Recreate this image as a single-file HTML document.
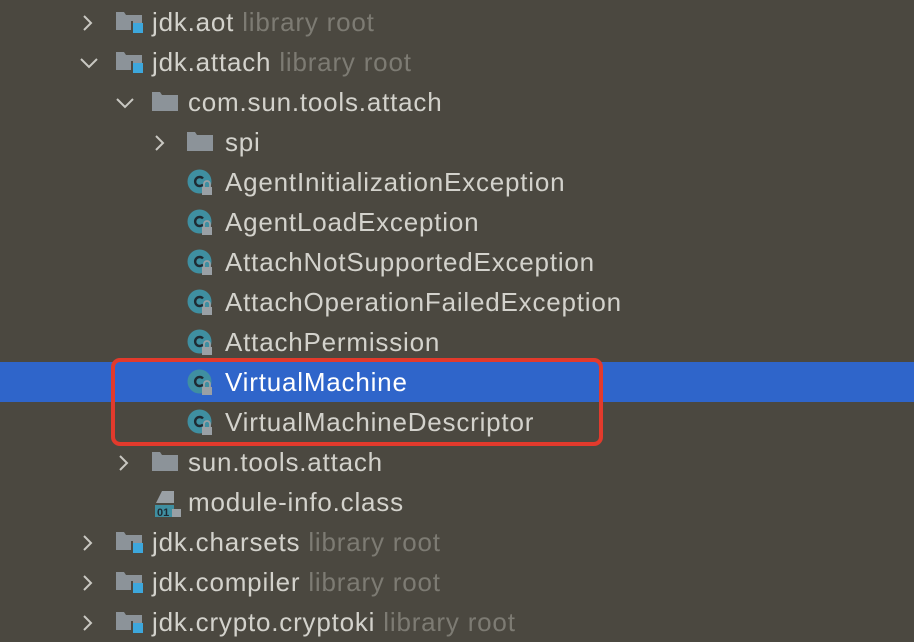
<!DOCTYPE html>
<html><head><meta charset="utf-8"><style>
body{margin:0;width:914px;height:620px;overflow:hidden;background:#4b4840;font-family:"Liberation Sans",sans-serif;position:relative}
.row{position:absolute;left:0;width:914px;height:40px}
.sel{background:#2f65ca}
.t{position:absolute;top:6px;font-size:26px;letter-spacing:0.8px;color:#d3d2cc;white-space:nowrap;line-height:28px}
.g{color:#7d7b73}
.sel .t{color:#fff}
.arr{position:absolute;top:12px}
.ic{position:absolute;top:8px}
.box{position:absolute;left:111px;top:358px;width:484px;height:80px;border:4px solid #e23a2c;border-radius:9px}
</style></head><body>
<svg width="0" height="0" style="position:absolute"><defs>
<g id="ar"><path d="M2 2 L9 9 L2 16" stroke="#c9c8c2" stroke-width="2" fill="none"/></g>
<g id="ad"><path d="M1 3 L9 11 L17 3" stroke="#c9c8c2" stroke-width="2" fill="none"/></g>
<g id="mod"><path d="M0 2 H8 L10 5 H26 V20 H0Z" fill="#8c9399"/><rect x="17" y="13" width="10" height="10" fill="#3da7dc"/><rect x="15" y="11" width="2" height="13" fill="#4b4840"/></g>
<g id="fold"><path d="M0 2 H8 L10 5 H26 V21 H0Z" fill="#8c9399"/></g>
<g id="cls"><circle cx="12.5" cy="12.5" r="12" fill="#3f8fa1"/><path d="M16 9.5 A4.5 4.5 0 1 0 16 15.5" stroke="#1f2a33" stroke-width="2.4" fill="none"/><rect x="15" y="18" width="10" height="8" fill="#9aa0a5"/><path d="M17 18 V15 A3 3 0 0 1 23 15 V18" stroke="#9aa0a5" stroke-width="1.8" fill="none"/></g>
</defs></svg>

<div class="row" style="top:2px"><svg class="arr" style="left:82px" width="20" height="20"><use href="#ar"/></svg><svg class="ic" style="left:116px" width="28" height="26"><use href="#mod"/></svg><span class="t" style="left:152px">jdk.aot <span class="g">library root</span></span></div>
<div class="row" style="top:42px"><svg class="arr" style="left:80px;top:14px" width="20" height="20"><use href="#ad"/></svg><svg class="ic" style="left:116px" width="28" height="26"><use href="#mod"/></svg><span class="t" style="left:152px">jdk.attach <span class="g">library root</span></span></div>
<div class="row" style="top:82px"><svg class="arr" style="left:116px;top:14px" width="20" height="20"><use href="#ad"/></svg><svg class="ic" style="left:152px" width="28" height="26"><use href="#fold"/></svg><span class="t" style="left:188px">com.sun.tools.attach</span></div>
<div class="row" style="top:122px"><svg class="arr" style="left:154px" width="20" height="20"><use href="#ar"/></svg><svg class="ic" style="left:187px" width="28" height="26"><use href="#fold"/></svg><span class="t" style="left:225px">spi</span></div>
<div class="row" style="top:162px"><svg class="ic" style="left:187px;top:7px" width="27" height="27"><use href="#cls"/></svg><span class="t" style="left:225px">AgentInitializationException</span></div>
<div class="row" style="top:202px"><svg class="ic" style="left:187px;top:7px" width="27" height="27"><use href="#cls"/></svg><span class="t" style="left:225px">AgentLoadException</span></div>
<div class="row" style="top:242px"><svg class="ic" style="left:187px;top:7px" width="27" height="27"><use href="#cls"/></svg><span class="t" style="left:225px">AttachNotSupportedException</span></div>
<div class="row" style="top:282px"><svg class="ic" style="left:187px;top:7px" width="27" height="27"><use href="#cls"/></svg><span class="t" style="left:225px">AttachOperationFailedException</span></div>
<div class="row" style="top:322px"><svg class="ic" style="left:187px;top:7px" width="27" height="27"><use href="#cls"/></svg><span class="t" style="left:225px">AttachPermission</span></div>
<div class="row sel" style="top:362px"><svg class="ic" style="left:187px;top:7px" width="27" height="27"><use href="#cls"/></svg><span class="t" style="left:225px">VirtualMachine</span></div>
<div class="row" style="top:402px"><svg class="ic" style="left:187px;top:7px" width="27" height="27"><use href="#cls"/></svg><span class="t" style="left:225px">VirtualMachineDescriptor</span></div>
<div class="row" style="top:442px"><svg class="arr" style="left:118px" width="20" height="20"><use href="#ar"/></svg><svg class="ic" style="left:152px" width="28" height="26"><use href="#fold"/></svg><span class="t" style="left:188px">sun.tools.attach</span></div>
<div class="row" style="top:482px"><svg class="ic" style="left:152px;top:7px" width="30" height="28"><path d="M10 2 H22 V14 H4 Z" fill="#9aa0a5"/><rect x="3" y="16" width="19" height="12" fill="#3f8fa1"/><text x="5" y="27" font-size="11" font-family="Liberation Sans" fill="#1f2a33" font-weight="bold">01</text><rect x="20" y="20" width="9" height="8" fill="#9aa0a5"/></svg><span class="t" style="left:188px">module-info.class</span></div>
<div class="row" style="top:522px"><svg class="arr" style="left:82px" width="20" height="20"><use href="#ar"/></svg><svg class="ic" style="left:116px" width="28" height="26"><use href="#mod"/></svg><span class="t" style="left:152px">jdk.charsets <span class="g">library root</span></span></div>
<div class="row" style="top:562px"><svg class="arr" style="left:82px" width="20" height="20"><use href="#ar"/></svg><svg class="ic" style="left:116px" width="28" height="26"><use href="#mod"/></svg><span class="t" style="left:152px">jdk.compiler <span class="g">library root</span></span></div>
<div class="row" style="top:602px"><svg class="arr" style="left:82px" width="20" height="20"><use href="#ar"/></svg><svg class="ic" style="left:116px" width="28" height="26"><use href="#mod"/></svg><span class="t" style="left:152px">jdk.crypto.cryptoki <span class="g">library root</span></span></div>
<div class="box"></div>
</body></html>
